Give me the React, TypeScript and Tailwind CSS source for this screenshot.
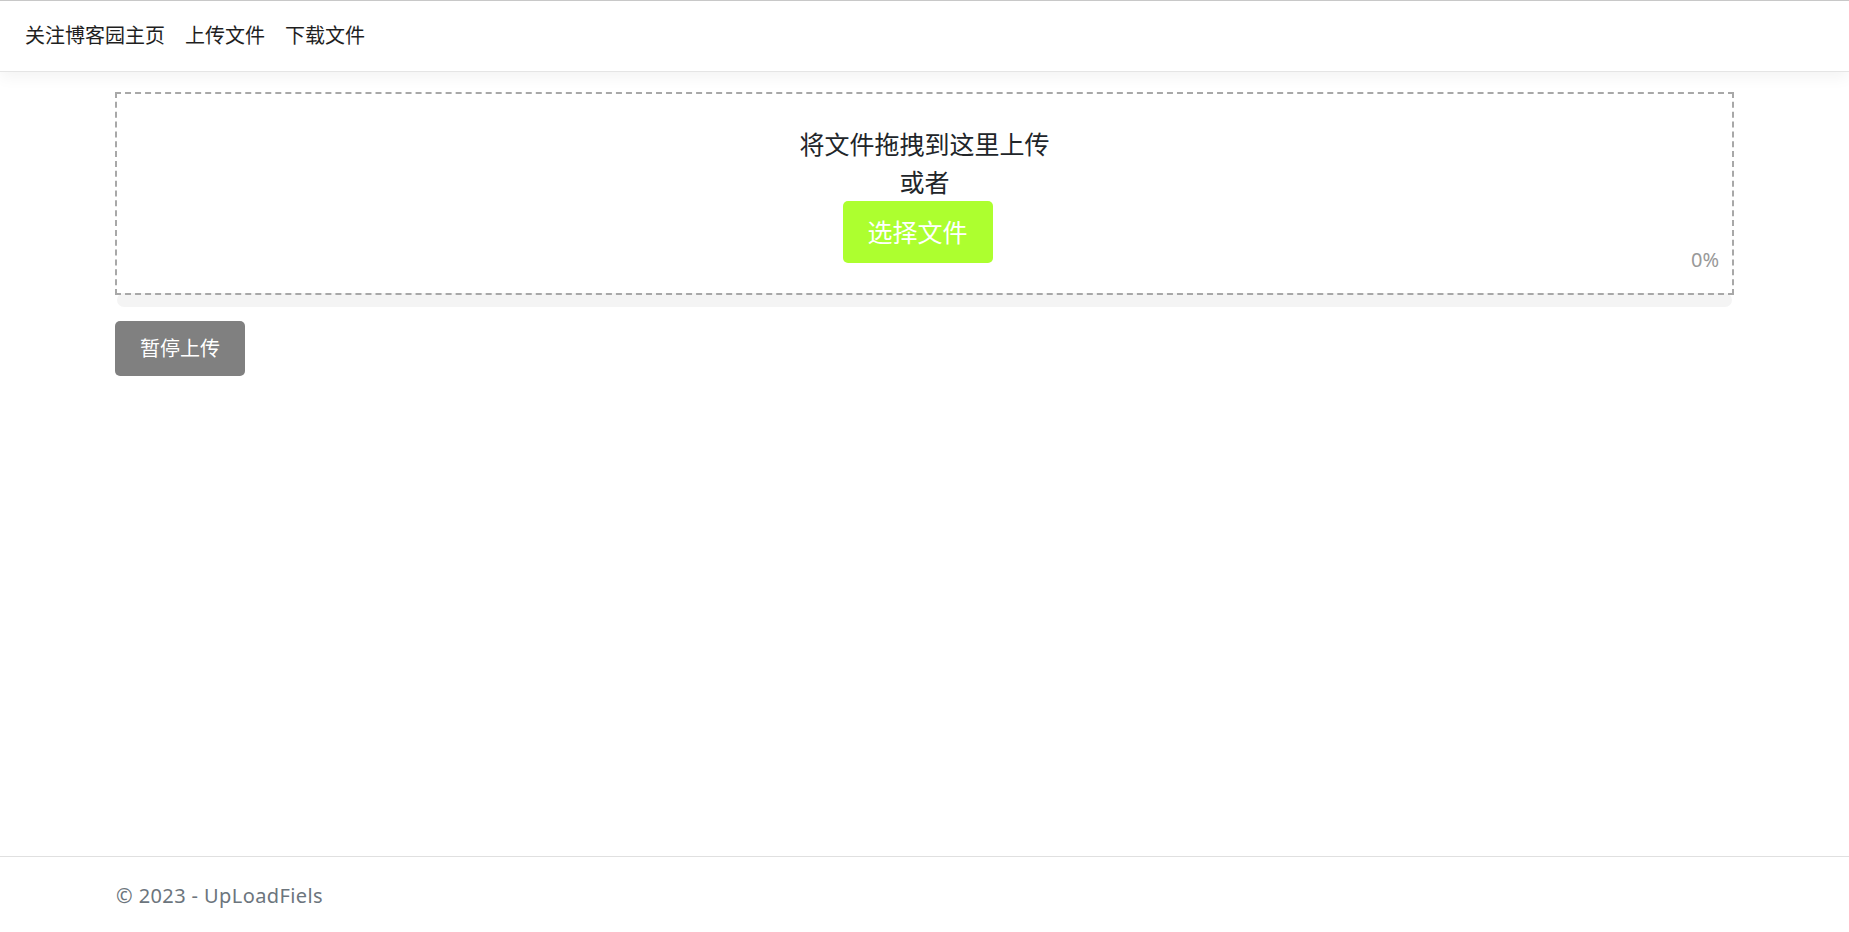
import React from "react";

const font = { fontFamily: '"Noto Sans", "Noto Sans CJK SC", sans-serif' };

export default function App() {
  return (
    <div
      className="min-h-[932px] flex flex-col bg-white text-[#212529]"
      style={font}
    >
      <header className="border-t border-[#c8c8c8] border-b border-b-[#e5e5e5] bg-white shadow-[0_5px_15px_rgba(0,0,0,0.05)] h-[72px] flex items-center px-[15px] relative z-10">
        <nav className="flex items-center text-[20px] leading-[30px] text-[#1f1f1f]">
          <a className="px-[10px]">关注博客园主页</a>
          <a className="px-[10px]">上传文件</a>
          <a className="px-[10px]">下载文件</a>
        </nav>
      </header>

      <main className="flex-1 px-[115px] pt-[20px]">
        <div className="relative border-2 border-dashed border-[#a8a8a8] h-[203px] flex flex-col items-center pt-[31px]">
          <div className="text-[25px] leading-[38px] text-[#212529]">将文件拖拽到这里上传</div>
          <div className="text-[25px] leading-[38px] text-[#212529]">或者</div>
          <button className="mr-[14px] w-[150px] h-[62px] rounded-[5px] bg-[#adff2f] text-white text-[25px] leading-[38px]">
            选择文件
          </button>
          <span className="absolute right-[13px] bottom-[18px] text-[20px] leading-[30px] text-[#999999]">
            0%
          </span>
        </div>
        <div className="-mt-[2px] mx-[2px] h-[14px] rounded-[7px] bg-[#f4f4f4]" />
        <button className="mt-[14px] w-[130px] h-[55px] rounded-[5px] bg-[#808080] text-white text-[20px] leading-[30px]">
          暂停上传
        </button>
      </main>

      <footer className="border-t border-[#e0e0e0] h-[76px] flex items-center px-[116px] pt-[3px]">
        <span className="text-[20px] leading-[30px] tracking-[0.4px] text-[#6c757d]">© 2023 - UpLoadFiels</span>
      </footer>
    </div>
  );
}
